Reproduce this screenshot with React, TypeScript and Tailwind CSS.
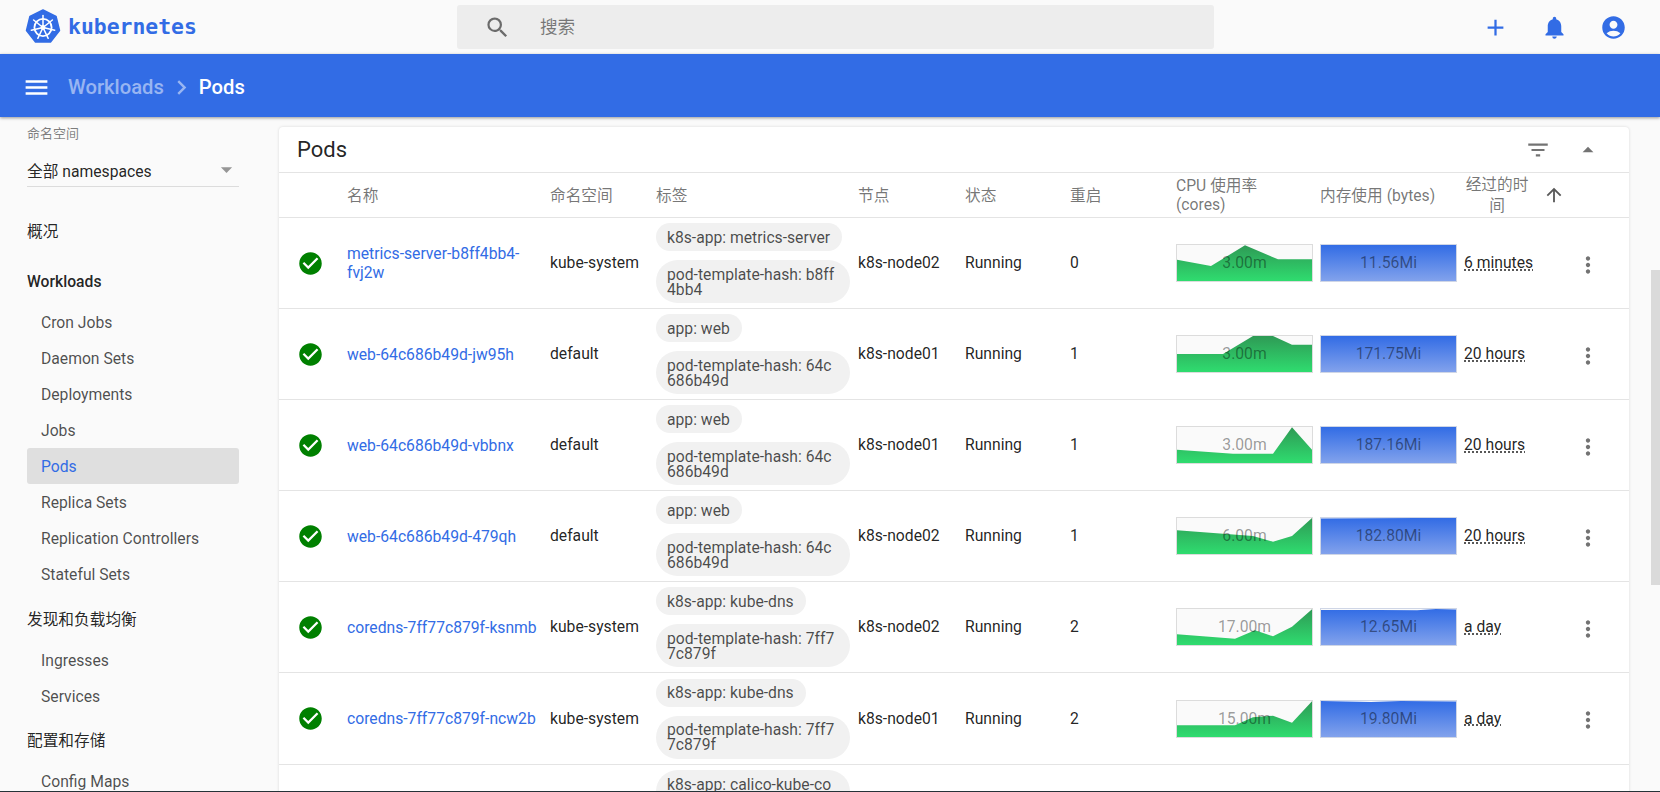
import React from 'react';
import {
  MdAccountCircle,
  MdAdd,
  MdArrowDropDown,
  MdArrowDropUp,
  MdArrowUpward,
  MdCheckCircle,
  MdChevronRight,
  MdFilterList,
  MdMenu,
  MdMoreVert,
  MdNotifications,
  MdSearch,
} from 'react-icons/md';

type Pod = {
  name: string;
  namespace: string;
  labels: string[];
  node: string;
  restarts: number;
  cpu: string;
  cpuPoints: string;
  mem: string;
  memTop: string;
  age: string;
  height: string;
};

const hash = 'pod-template-hash: ';

const pods: Pod[] = [
  {
    name: 'metrics-server-b8ff4bb4-fvj2w',
    namespace: 'kube-system',
    labels: ['k8s-app: metrics-server', hash + 'b8ff4bb4'],
    node: 'k8s-node02',
    restarts: 0,
    cpu: '3.00m',
    cpuPoints: '0,14.7 34,21 68,0.3 101,14.3 135,14.3',
    mem: '11.56Mi',
    memTop: '0,0 135,0',
    age: '6 minutes',
    height: 'h-[91px]',
  },
  {
    name: 'web-64c686b49d-jw95h',
    namespace: 'default',
    labels: ['app: web', hash + '64c686b49d'],
    node: 'k8s-node01',
    restarts: 1,
    cpu: '3.00m',
    cpuPoints: '0,18 46,18 76,0 96,0 115,8.7 135,8.7',
    mem: '171.75Mi',
    memTop: '0,0 135,0',
    age: '20 hours',
    height: 'h-[91px]',
  },
  {
    name: 'web-64c686b49d-vbbnx',
    namespace: 'default',
    labels: ['app: web', hash + '64c686b49d'],
    node: 'k8s-node01',
    restarts: 1,
    cpu: '3.00m',
    cpuPoints: '0,22.7 56,26.7 96,26.7 115,0.3 135,22.7',
    mem: '187.16Mi',
    memTop: '0,0 135,0',
    age: '20 hours',
    height: 'h-[91px]',
  },
  {
    name: 'web-64c686b49d-479qh',
    namespace: 'default',
    labels: ['app: web', hash + '64c686b49d'],
    node: 'k8s-node02',
    restarts: 1,
    cpu: '6.00m',
    cpuPoints: '0,12.3 76,18 96,23.7 115,18 135,0',
    mem: '182.80Mi',
    memTop: '0,0.6 96,0 135,0',
    age: '20 hours',
    height: 'h-[91px]',
  },
  {
    name: 'coredns-7ff77c879f-ksnmb',
    namespace: 'kube-system',
    labels: ['k8s-app: kube-dns', hash + '7ff77c879f'],
    node: 'k8s-node02',
    restarts: 2,
    cpu: '17.00m',
    cpuPoints: '0,25.3 58,29.7 78,21.3 96,27.3 115,17.7 135,0.3',
    mem: '12.65Mi',
    memTop: '0,1 58,1 96,1.2 115,0 135,0.6',
    age: 'a day',
    height: 'h-[91px]',
  },
  {
    name: 'coredns-7ff77c879f-ncw2b',
    namespace: 'kube-system',
    labels: ['k8s-app: kube-dns', hash + '7ff77c879f'],
    node: 'k8s-node01',
    restarts: 2,
    cpu: '15.00m',
    cpuPoints: '0,24.3 58,24.3 76,16.3 96,14.7 115,21.7 135,0.3',
    mem: '19.80Mi',
    memTop: '0,0 50,1 80,0 135,0.6',
    age: 'a day',
    height: 'h-[92px]',
  },
];

const columns = 'grid grid-cols-[68px_203px_106px_202px_107px_105px_106px_144px_144px_1fr]';

const Logo = () => (
  <svg width="36" height="36" viewBox="0 0 36 36" className="shrink-0">
    <path
      d="M18 1 L31 7.3 L34.5 21.5 L25.5 33 L10.5 33 L1.5 21.5 L5 7.3 Z"
      fill="#326ce5"
      stroke="#326ce5"
      strokeWidth="1.5"
      strokeLinejoin="round"
    />
    <circle cx="18" cy="18.5" r="8.6" fill="none" stroke="#fff" strokeWidth="1.8" />
    <circle cx="18" cy="18.5" r="2.4" fill="#fff" />
    <g stroke="#fff" strokeWidth="1.5" strokeLinecap="round">
      <path d="M18 18.5 V6.5" />
      <path d="M18 18.5 L27.4 11" />
      <path d="M18 18.5 L29.7 21.2" />
      <path d="M18 18.5 L23.2 29.3" />
      <path d="M18 18.5 L12.8 29.3" />
      <path d="M18 18.5 L6.3 21.2" />
      <path d="M18 18.5 L8.6 11" />
    </g>
  </svg>
);

const NavGroup = ({ label, className }: { label: string; className: string }) => (
  <div className={`flex h-9 items-center pt-[3px] text-black/87 ${className}`}>{label}</div>
);

const NavItem = ({ label, active }: { label: string; active?: boolean }) => (
  <div
    className={
      active
        ? 'flex h-9 items-center rounded-[3px] bg-[#dfdfdf] pl-[14px] pt-[2px] text-[#326ce5]'
        : 'flex h-9 items-center pl-[14px] pt-[2px] text-black/70'
    }
  >
    {label}
  </div>
);

const Sidebar = () => (
  <aside className="w-[279px] shrink-0 overflow-hidden pt-[9px] pr-[40px] pl-[27px]">
    <div className="h-[16px] text-[13px] leading-[16px] text-black/50">命名空间</div>
    <div className="flex h-[45px] items-end justify-between border-b border-[#dcdcdc] pb-[2px]">
      <span className="text-black/87">全部 namespaces</span>
      <MdArrowDropDown size={27} className="mr-[-1px] mb-[1px] text-black/40" />
    </div>
    <NavGroup label="概况" className="mt-[25px]" />
    <NavGroup label="Workloads" className="mt-[14px] font-medium" />
    <div className="mt-[6px]">
      <NavItem label="Cron Jobs" />
      <NavItem label="Daemon Sets" />
      <NavItem label="Deployments" />
      <NavItem label="Jobs" />
      <NavItem label="Pods" active />
      <NavItem label="Replica Sets" />
      <NavItem label="Replication Controllers" />
      <NavItem label="Stateful Sets" />
    </div>
    <NavGroup label="发现和负载均衡" className="mt-[8px]" />
    <div className="mt-[6px]">
      <NavItem label="Ingresses" />
      <NavItem label="Services" />
    </div>
    <NavGroup label="配置和存储" className="mt-[7px]" />
    <div className="mt-[6px]">
      <NavItem label="Config Maps" />
    </div>
  </aside>
);

const Chip = ({ text }: { text: string }) => (
  <div className="w-fit max-w-[194px] rounded-[22px] bg-[#f1f1f1] py-[6.5px] pr-3 pl-[11px] leading-[15px] break-all text-black/70">
    {text}
  </div>
);

const CpuChart = ({ id, points, label }: { id: string; points: string; label: string }) => (
  <div className="relative h-[38px] w-[137px] border border-[#dcdcdc] bg-[#fafafa]">
    <svg width="135" height="36" viewBox="0 0 135 36" className="block">
      <defs>
        <linearGradient id={id} x1="0" y1="0" x2="0" y2="1">
          <stop offset="0" stopColor="#2e9a55" />
          <stop offset="1" stopColor="#2fdc6f" />
        </linearGradient>
      </defs>
      <polygon points={`${points} 135,36 0,36`} fill={`url(#${id})`} />
    </svg>
    <div className="absolute inset-0 flex items-center justify-center text-black/40">{label}</div>
  </div>
);

const MemChart = ({ id, top, label }: { id: string; top: string; label: string }) => (
  <div className="relative h-[38px] w-[137px] border border-[#cfd6e6] bg-[#fafafa]">
    <svg width="135" height="36" viewBox="0 0 135 36" className="block">
      <defs>
        <linearGradient id={id} x1="0" y1="0" x2="0" y2="1">
          <stop offset="0" stopColor="#326ce5" />
          <stop offset="1" stopColor="#82a2ec" />
        </linearGradient>
      </defs>
      <polygon points={`${top} 135,36 0,36`} fill={`url(#${id})`} />
    </svg>
    <div className="absolute inset-0 flex items-center justify-center text-black/45">{label}</div>
  </div>
);

const PodRow = ({ pod, index }: { pod: Pod; index: number }) => (
  <div className={`${columns} ${pod.height} items-center border-b border-[#e4e4e4]`}>
    <div className="pl-[18px]">
      <MdCheckCircle size={27} className="text-[#008000]" />
    </div>
    <a className="pr-2 leading-[19px] break-words text-[#326ce5]">{pod.name}</a>
    <div className="text-black/87">{pod.namespace}</div>
    <div className="flex flex-col gap-[9px]">
      {pod.labels.map((label) => (
        <Chip key={label} text={label} />
      ))}
    </div>
    <div className="text-black/87">{pod.node}</div>
    <div className="text-black/87">Running</div>
    <div className="text-black/87">{pod.restarts}</div>
    <CpuChart id={`cpu-${index}`} points={pod.cpuPoints} label={pod.cpu} />
    <MemChart id={`mem-${index}`} top={pod.memTop} label={pod.mem} />
    <div className="flex items-center justify-between pr-[28px] text-black/87">
      <span className="underline decoration-dotted underline-offset-[1px]">{pod.age}</span>
      <MdMoreVert size={26} className="mt-[3px] text-black/55" />
    </div>
  </div>
);

const PodsCard = () => (
  <section className="mt-[10px] h-[800px] w-[1350px] rounded-[4px] bg-white shadow-[0_0_3px_rgba(0,0,0,0.14)]">
    <div className="flex h-[46px] items-center justify-between border-b border-[#e4e4e4] pr-[28px] pl-[18px]">
      <h1 className="text-[22px] font-normal text-black/87">Pods</h1>
      <div className="flex items-center gap-[24px]">
        <MdFilterList size={26} className="text-black/55" />
        <MdArrowDropUp size={26} className="text-black/55" />
      </div>
    </div>
    <div className={`${columns} h-[45px] items-center border-b border-[#e4e4e4] leading-[19px] text-black/55`}>
      <div />
      <div>名称</div>
      <div>命名空间</div>
      <div>标签</div>
      <div>节点</div>
      <div>状态</div>
      <div>重启</div>
      <div className="pr-6">CPU 使用率 (cores)</div>
      <div>内存使用 (bytes)</div>
      <div className="flex items-center">
        <div className="w-[66px] text-center leading-[21px]">经过的时间</div>
        <MdArrowUpward size={22} className="ml-[13px] text-black/65" />
      </div>
    </div>
    {pods.map((pod, i) => (
      <PodRow key={pod.name} pod={pod} index={i} />
    ))}
    <div className={`${columns} pt-[5px]`}>
      <div className="col-start-4">
        <Chip text="k8s-app: calico-kube-controllers" />
      </div>
    </div>
  </section>
);

export default function App() {
  return (
    <div className="relative flex h-screen flex-col overflow-hidden bg-[#fafafa] font-['Roboto','Noto_Sans_CJK_SC',sans-serif] text-[15.7px]">
      <header className="flex h-[54px] shrink-0 items-center">
        <div className="flex w-[457px] items-center gap-[7px] pl-[25px]">
          <Logo />
          <span className="font-['DejaVu_Sans_Mono',monospace] text-[21.4px] font-bold text-[#326ce5]">kubernetes</span>
        </div>
        <div className="flex h-[44px] w-[757px] items-center gap-[29px] rounded-[3px] bg-[#ededed] pl-[27px]">
          <MdSearch size={27} className="text-black/55" />
          <span className="text-[17.6px] text-black/50">搜索</span>
        </div>
        <div className="flex flex-1 items-center justify-end gap-[32px] pr-[33px] text-[#326ce5]">
          <MdAdd size={27} />
          <MdNotifications size={27} />
          <MdAccountCircle size={27} />
        </div>
      </header>
      <div className="z-10 flex h-[63px] shrink-0 items-center bg-[#326ce5] pt-[3px] pl-[22px] text-[20.2px] font-medium shadow-[0_1px_3px_rgba(0,0,0,0.4)]">
        <MdMenu size={29} className="text-white" />
        <span className="ml-[17px] text-white/50">Workloads</span>
        <MdChevronRight size={29} className="mx-[3px] text-white/50" />
        <span className="text-white">Pods</span>
      </div>
      <main className="flex min-h-0 flex-1 overflow-hidden">
        <Sidebar />
        <PodsCard />
      </main>
      <div className="h-px shrink-0 bg-[#263238]" />
      <div className="absolute top-[270px] right-0 h-[315px] w-[9px] bg-[#dadada]" />
    </div>
  );
}
